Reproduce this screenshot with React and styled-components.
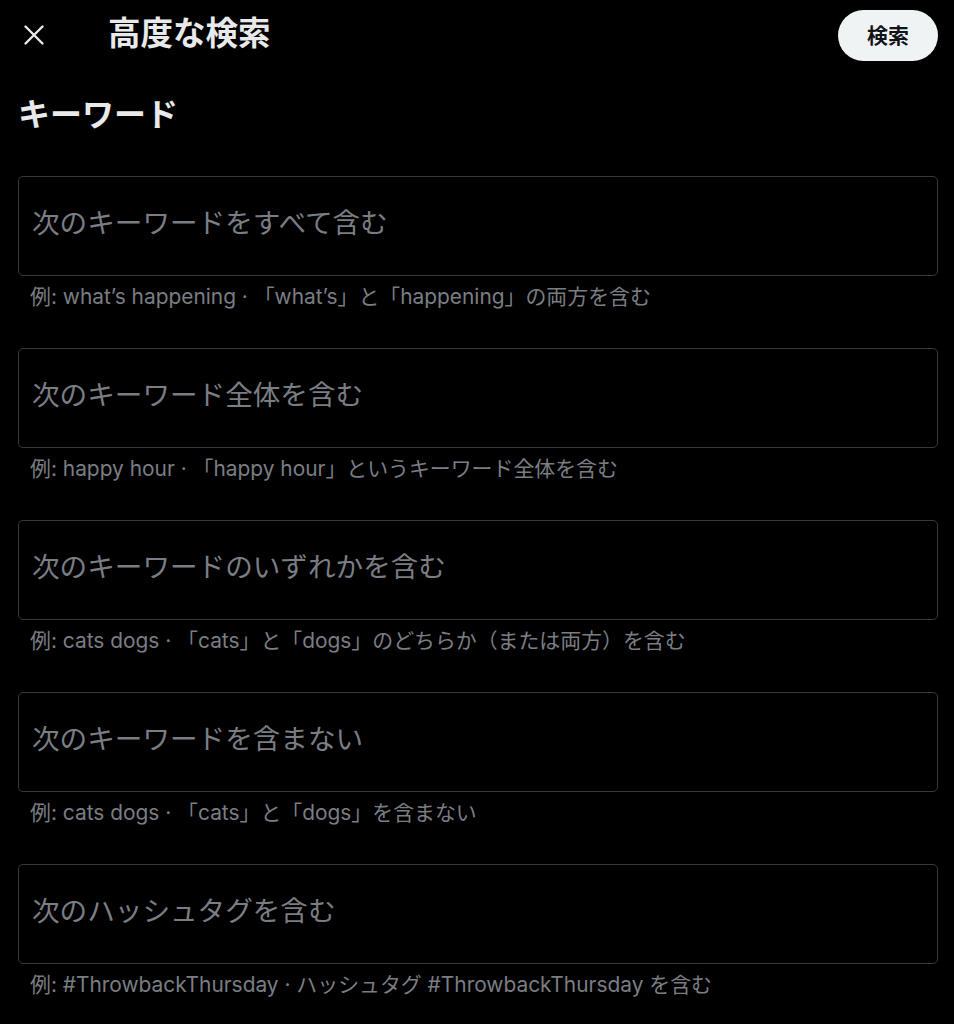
import React from "react";
import styled, { createGlobalStyle } from "styled-components";

const GlobalStyle = createGlobalStyle`
  html, body {
    margin: 0;
    padding: 0;
    background: #000;
  }
  body {
    font-family: "Inter", "Noto Sans CJK JP", sans-serif;
    color: #e7e9ea;
  }
`;

const Page = styled.div`
  min-height: 1024px;
  background: #000;
  padding: 0 16px 0 18px;
  box-sizing: border-box;
`;

const Header = styled.header`
  height: 70px;
  display: flex;
  align-items: center;
`;

const CloseButton = styled.button`
  width: 36px;
  height: 36px;
  margin-left: -2px;
  padding: 0;
  border: none;
  background: transparent;
  display: flex;
  align-items: center;
  justify-content: center;
  color: #e7e9ea;
  cursor: pointer;
`;

const Title = styled.h1`
  margin: -3px 0 0 56px;
  font-size: 32.5px;
  line-height: 40px;
  font-weight: 700;
  color: #e7e9ea;
  flex: 1;
`;

const SearchButton = styled.button`
  width: 100px;
  height: 51px;
  padding: 0 0 3px;
  border: none;
  border-radius: 999px;
  background: #eff3f4;
  color: #0f1419;
  font-family: "Inter", "Noto Sans CJK JP", sans-serif;
  font-size: 21px;
  font-weight: 700;
  cursor: pointer;
`;

const SectionTitle = styled.h2`
  margin: 25px 0 41px;
  font-size: 32px;
  line-height: 40px;
  font-weight: 700;
  color: #e7e9ea;
`;

const Field = styled.div`
  margin-bottom: 39px;
`;

const Input = styled.input`
  display: block;
  width: 100%;
  height: 100px;
  box-sizing: border-box;
  padding: 0 13px 6px;
  border: 1px solid #37393d;
  border-radius: 5px;
  background: transparent;
  color: #e7e9ea;
  font-family: "Inter", "Noto Sans CJK JP", sans-serif;
  font-size: 27.6px;
  outline: none;
  &::placeholder {
    color: #7a7e83;
  }
`;

const Hint = styled.p`
  margin: 9px 0 0 12px;
  font-size: 20.9px;
  line-height: 24px;
  color: #7a7e83;
`;

const fields = [
  {
    placeholder: "次のキーワードをすべて含む",
    hint: "例: what’s happening · 「what’s」と「happening」の両方を含む",
  },
  {
    placeholder: "次のキーワード全体を含む",
    hint: "例: happy hour · 「happy hour」というキーワード全体を含む",
  },
  {
    placeholder: "次のキーワードのいずれかを含む",
    hint: "例: cats dogs · 「cats」と「dogs」のどちらか（または両方）を含む",
  },
  {
    placeholder: "次のキーワードを含まない",
    hint: "例: cats dogs · 「cats」と「dogs」を含まない",
  },
  {
    placeholder: "次のハッシュタグを含む",
    hint: "例: #ThrowbackThursday · ハッシュタグ #ThrowbackThursday を含む",
  },
];

const CloseIcon = () => (
  <svg width="24" height="24" viewBox="0 0 24 24" aria-hidden="true">
    <path
      d="M3.5 3.5 L20.5 20.5 M20.5 3.5 L3.5 20.5"
      stroke="currentColor"
      strokeWidth="2.4"
      strokeLinecap="round"
      fill="none"
    />
  </svg>
);

export default function App() {
  return (
    <Page>
      <GlobalStyle />
      <Header>
        <CloseButton aria-label="閉じる">
          <CloseIcon />
        </CloseButton>
        <Title>高度な検索</Title>
        <SearchButton>検索</SearchButton>
      </Header>
      <SectionTitle>キーワード</SectionTitle>
      {fields.map((f) => (
        <Field key={f.placeholder}>
          <Input placeholder={f.placeholder} />
          <Hint>{f.hint}</Hint>
        </Field>
      ))}
    </Page>
  );
}
